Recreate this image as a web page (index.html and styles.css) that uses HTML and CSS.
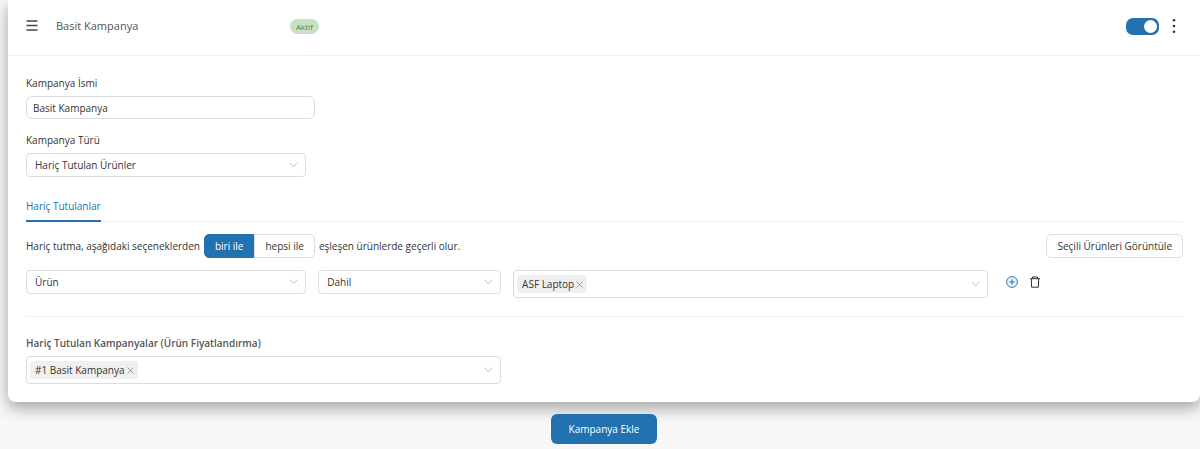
FILE: index.html
```
<!DOCTYPE html>
<html lang="tr">
<head>
    <meta charset="UTF-8">
    <title>Basit Kampanya</title>
    <link rel="stylesheet" href="styles.css">
</head>
<body>
    <form class="campaign">
        <div class="card">
            <div class="card-header">
                <button type="button" class="icon-btn drag-btn" aria-label="Sırala">
                    <svg width="12" height="12" viewBox="0 0 12 12" fill="none" stroke="#444" stroke-width="1.3"><path d="M0.5 1h11M0.5 5.5h11M0.5 10h11"/></svg>
                </button>
                <h1 class="card-title">Basit Kampanya</h1>
                <span class="badge">Aktif</span>
                <input type="checkbox" class="switch" aria-label="Kampanya aktif" checked>
                <button type="button" class="icon-btn more-btn" aria-label="Menü">
                    <svg width="4" height="16" viewBox="0 0 4 16" fill="#333"><circle cx="2" cy="2.3" r="1.3"/><circle cx="2" cy="8" r="1.3"/><circle cx="2" cy="13.7" r="1.3"/></svg>
                </button>
            </div>

            <div class="card-body">
                <div class="field">
                    <label for="name">Kampanya İsmi</label>
                    <input type="text" id="name" class="text-input" value="Basit Kampanya">
                </div>
                <div class="field grid">
                    <label for="type" class="col-24">Kampanya Türü</label>
                    <div class="select col-6">
                        <select id="type"><option>Hariç Tutulan Ürünler</option></select>
                        <svg class="arrow" viewBox="0 0 10 6"><path d="M1 0.5l4 4.5l4-4.5"/></svg>
                    </div>
                </div>

                <div class="tabs">
                    <a href="#excludes" class="tab on">Hariç Tutulanlar</a>
                </div>

                <div id="excludes">
                    <div class="match">
                        <span>Hariç tutma, aşağıdaki seçeneklerden</span>
                        <div class="segment">
                            <button type="button" class="on">biri ile</button>
                            <button type="button">hepsi ile</button>
                        </div>
                        <span>eşleşen ürünlerde geçerli olur.</span>
                        <button type="button" class="btn show-btn">Seçili Ürünleri Görüntüle</button>
                    </div>

                    <div class="grid rule">
                        <div class="select col-6">
                            <select aria-label="Alan"><option>Ürün</option></select>
                            <svg class="arrow" viewBox="0 0 10 6"><path d="M1 0.5l4 4.5l4-4.5"/></svg>
                        </div>
                        <div class="select col-4">
                            <select aria-label="Koşul"><option>Dahil</option></select>
                            <svg class="arrow" viewBox="0 0 10 6"><path d="M1 0.5l4 4.5l4-4.5"/></svg>
                        </div>
                        <div class="select multi col-10">
                            <span class="tag">ASF Laptop
                                <button type="button" aria-label="Kaldır"><svg width="7" height="7" viewBox="0 0 7 7"><path d="M0.5 0.5l6 6M6.5 0.5l-6 6"/></svg></button>
                            </span>
                            <input type="text" aria-label="Ürünler">
                            <svg class="arrow" viewBox="0 0 10 6"><path d="M1 0.5l4 4.5l4-4.5"/></svg>
                        </div>
                        <div class="actions col-4">
                            <button type="button" class="icon-btn" aria-label="Ekle">
                                <svg width="12" height="12" viewBox="0 0 12 12" fill="#e4f1fa" stroke="#2271b1"><circle cx="6" cy="6" r="5.4" stroke-width="0.9"/><path d="M6 3.3v5.4M3.3 6h5.4"/></svg>
                            </button>
                            <button type="button" class="icon-btn" aria-label="Sil">
                                <svg width="10" height="12" viewBox="0 0 10 12" fill="none" stroke="#333"><path d="M0 2.7h10M2.5 2.5V1h5v1.5M1.3 2.8l0.3 8.4h6.8l0.3-8.4"/></svg>
                            </button>
                        </div>
                    </div>
                </div>

                <div class="grid excluded">
                    <label for="campaigns" class="col-24">Hariç Tutulan Kampanyalar (Ürün Fiyatlandırma)</label>
                    <div class="select multi col-10">
                        <span class="tag">#1 Basit Kampanya
                            <button type="button" aria-label="Kaldır"><svg width="7" height="7" viewBox="0 0 7 7"><path d="M0.5 0.5l6 6M6.5 0.5l-6 6"/></svg></button>
                        </span>
                        <input type="text" id="campaigns">
                        <svg class="arrow" viewBox="0 0 10 6"><path d="M1 0.5l4 4.5l4-4.5"/></svg>
                    </div>
                </div>
            </div>
        </div>

        <div class="footer">
            <button type="button" class="btn add-btn">Kampanya Ekle</button>
        </div>
    </form>
</body>
</html>
```

FILE: styles.css
```
*{
    padding: 0;
    margin: 0;
    box-sizing: border-box;
}
body{
    background-color: #f8f8f8;
    color: #333;
    font-family: "Open Sans", "Noto Sans", sans-serif;
    font-size: 10px;
    line-height: 14px;
}
button, input, select{
    font: inherit;
    color: inherit;
    border: none;
    background: none;
}
button{
    cursor: pointer;
}
.campaign{
    padding-left: 8px;
}
.card{
    background-color: #fff;
    border-radius: 0 0 8px 8px;
    box-shadow: 0 6px 16px rgba(0,0,0,.35);
}

/* header */
.card-header{
    display: flex;
    align-items: center;
    height: 56px;
    padding: 0 24px 3px 18px;
    border-bottom: 1px solid #f0f0f0;
}
.icon-btn{
    display: flex;
}
.card-title{
    width: 234px;
    margin-left: 18px;
    font-size: 11px;
    font-weight: 400;
    line-height: 16px;
    color: #555;
}
.badge{
    padding: 0 6px;
    border-radius: 8px;
    background-color: #c6e1c6;
    color: #5b841b;
    font-size: 8px;
    line-height: 15px;
}
.switch{
    appearance: none;
    display: flex;
    width: 33px;
    height: 17px;
    margin-left: auto;
    padding: 2px;
    border-radius: 7px;
    background-color: #2271b1;
    cursor: pointer;
}
.switch::before{
    content: "";
    width: 13px;
    height: 13px;
    border-radius: 50%;
    background-color: #fff;
}
.switch:checked::before{
    margin-left: auto;
}
.more-btn{
    margin-left: 13px;
}

/* fields */
.card-body{
    padding: 20px 17px 18px 18px;
}
.grid{
    display: grid;
    grid-template-columns: repeat(24, 1fr);
    column-gap: 12px;
    align-items: start;
}
.col-4{
    grid-column: span 4;
}
.col-6{
    grid-column: span 6;
}
.col-10{
    grid-column: span 10;
}
.col-24{
    grid-column: span 24;
}
.field{
    margin-bottom: 14px;
}
.field label{
    display: block;
    margin-bottom: 6px;
}
.text-input{
    display: block;
    width: 25%;
    height: 23px;
    padding: 0 6px;
    border: 1px solid #ddd;
    border-radius: 6px;
}
.select{
    position: relative;
    display: flex;
    align-items: center;
    height: 24px;
    border: 1px solid #ddd;
    border-radius: 4px;
}
.select select{
    appearance: none;
    width: 100%;
    height: 100%;
    padding: 0 24px 0 8px;
}
.arrow{
    position: absolute;
    right: 7px;
    width: 9px;
    height: 6px;
    fill: none;
    stroke: #bbb;
    pointer-events: none;
}
.multi{
    height: 28px;
    padding: 0 24px 0 3px;
}
.multi input{
    flex: 1;
    min-width: 0;
}
.tag{
    display: flex;
    align-items: center;
    gap: 2px;
    height: 18px;
    padding: 0 4px 0 5px;
    border-radius: 3px;
    background-color: #f0f0f0;
}
.tag button{
    display: flex;
}
.tag path{
    stroke: #888;
    stroke-width: .8;
}

/* tabs */
.tabs{
    display: flex;
    margin: 22px 0 12px;
    border-bottom: 1px solid #f0f0f0;
}
.tab{
    margin-bottom: -1px;
    padding-bottom: 7px;
    text-decoration: none;
}
.tab.on{
    color: #2271b1;
    border-bottom: 2px solid #2271b1;
}

/* match row */
.match{
    display: flex;
    align-items: center;
    gap: 4px;
    margin-bottom: 12px;
}
.segment{
    display: flex;
}
.segment button{
    height: 24px;
    padding: 0 10px;
    border: 1px solid #ddd;
    border-radius: 0 5px 5px 0;
}
.segment .on{
    border-color: #2271b1;
    border-radius: 5px 0 0 5px;
    background-color: #2271b1;
    color: #fff;
}
.btn{
    height: 24px;
    padding: 0 10px;
    border: 1px solid #ddd;
    border-radius: 5px;
}
.show-btn{
    margin-left: auto;
}
.rule{
    padding-bottom: 18px;
    border-bottom: 1px solid #f0f0f0;
}
.actions{
    display: flex;
    align-items: center;
    gap: 12px;
    height: 24px;
    padding-left: 6px;
}
.excluded{
    padding-top: 19px;
}
.excluded label{
    margin-bottom: 6px;
    font-weight: 600;
    color: #555;
}

.footer{
    padding: 12px 0;
    text-align: center;
}
.add-btn{
    height: 30px;
    padding: 0 18px;
    border: none;
    border-radius: 6px;
    background-color: #2271b1;
    color: #fff;
}
```
